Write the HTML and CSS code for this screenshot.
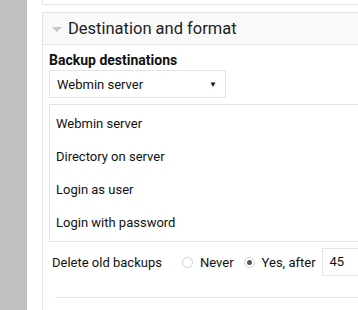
FILE: index.html
```html
<!DOCTYPE html>
<html lang="en">
<head>
  <meta charset="UTF-8" />
  <title>Backup</title>
  <link rel="stylesheet" href="styles.css">
</head>
<body>
  <div class="page">
    <div class="sidebar"></div>
    <div class="main">
      <div class="prev-card"></div>

      <div class="card">
        <div class="card-header">
          <span class="caret"></span>
          <span class="card-title">Destination and format</span>
        </div>
        <div class="card-body">
          <div class="field-label">Backup destinations</div>
          <div class="select">
            <span>Webmin server</span>
            <span class="select-arrow">&#9660;</span>
          </div>
          <div class="options">
            <div class="option">Webmin server</div>
            <div class="option">Directory on server</div>
            <div class="option">Login as user</div>
            <div class="option">Login with password</div>
          </div>
          <div class="form-row">
            <span class="row-label">Delete old backups</span>
            <label class="radio"><span class="radio-dot"></span>Never</label>
            <label class="radio"><span class="radio-dot checked"></span>Yes, after</label>
            <div class="text-input">45</div>
          </div>
          <div class="separator"></div>
        </div>
      </div>
    </div>
  </div>
</body>
</html>
```

FILE: styles.css
```css
body {
  margin: 0;
  font-family: Roboto, "Liberation Sans", sans-serif;
  color: #111;
  background: #fff;
}
.page {
  display: flex;
  height: 310px;
  overflow: hidden;
}
.sidebar {
  width: 27px;
  flex: none;
  background: #c0c0c0;
}
.main {
  flex: 1;
  padding-left: 15px;
  overflow: hidden;
}
.prev-card {
  height: 4px;
  border: 1px solid #e3e3e3;
  border-top: none;
  margin-right: -20px;
  margin-bottom: 7px;
}
.card {
  border: 1px solid #e3e3e3;
  border-bottom: none;
  margin-right: -20px;
  height: 300px;
}
.card-header {
  height: 31px;
  background: #f9f9f9;
  border-bottom: 1px solid #e3e3e3;
  display: flex;
  align-items: center;
}
/* little grey triangle before the title */
.caret {
  width: 0;
  height: 0;
  border-left: 5px solid transparent;
  border-right: 5px solid transparent;
  border-top: 5px solid #c8c8c8;
  margin: 1px 6px 0 9px;
}
.card-title {
  font-size: 16.5px;
  color: #222;
}
.card-body {
  padding: 7px 0 0 6px;
}
.field-label {
  font-size: 14px;
  font-weight: bold;
  line-height: 17px;
}
.select {
  width: 168px;
  height: 26px;
  border: 1px solid #e3e3e3;
  margin-top: 1px;
  display: flex;
  align-items: center;
  justify-content: space-between;
  padding: 0 0 0 7px;
  font-size: 13px;
}
.select-arrow {
  font-size: 8px;
  margin-right: 8px;
}
.options {
  margin-top: 6px;
  border: 1px solid #e3e3e3;
  padding: 2px 0 2px;
  font-size: 13px;
}
.option {
  height: 33px;
  line-height: 33px;
  padding-left: 6px;
}
.form-row {
  display: flex;
  align-items: center;
  margin-top: 6px;
  font-size: 13px;
  padding-left: 3px;
  white-space: nowrap;
}
.form-row > * {
  flex: none;
}
.row-label {
  width: 130px;
}
.radio {
  display: flex;
  align-items: center;
  margin-right: 10px;
}
.radio-dot {
  width: 9px;
  height: 9px;
  border: 1px solid #cfcfcf;
  border-radius: 50%;
  margin-right: 7px;
  position: relative;
}
.radio-dot.checked::after {
  content: "";
  position: absolute;
  left: 2px;
  top: 2px;
  width: 5px;
  height: 5px;
  border-radius: 50%;
  background: #555;
}
.text-input {
  width: 80px;
  height: 26px;
  line-height: 26px;
  border: 1px solid #e3e3e3;
  padding-left: 7px;
  margin-left: -4px;
}
.separator {
  margin: 21px 0 0 6px;
  border-top: 1px solid #e3e3e3;
}
```
